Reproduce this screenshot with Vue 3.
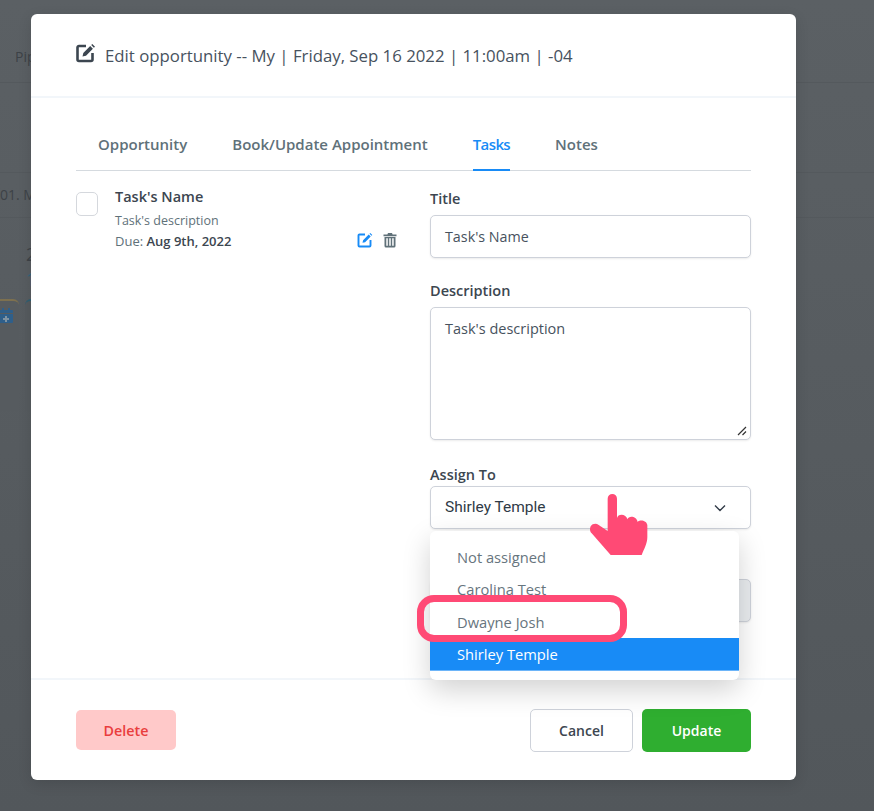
<script setup>
const tabs = [
  { label: 'Opportunity', active: false },
  { label: 'Book/Update Appointment', active: false },
  { label: 'Tasks', active: true },
  { label: 'Notes', active: false },
]
const options = ['Not assigned', 'Carolina Test', 'Dwayne Josh', 'Shirley Temple']
</script>

<template>
  <div class="page">
    <div class="backdrop">
      <div class="bg-nav">Pipelines</div>
      <div class="bg-band">01. My pipeline</div>
      <div class="bg-col">
        <div class="bg-num">2</div>
        <div class="bg-num teal">1</div>
      </div>
      <div class="bg-cards">
        <div class="bg-card gold">
          <svg class="bg-cal" viewBox="0 0 14 16" width="14" height="16">
            <path d="M1 3h12a1 1 0 0 1 1 1v2H0V4a1 1 0 0 1 1-1zM3 1h2v3H3zM9 1h2v3H9zM0 7h14v8a1 1 0 0 1-1 1H1a1 1 0 0 1-1-1z" fill="#2f5f8a" />
            <path d="M6 9h2v2h2v2H8v2H6v-2H4v-2h2z" fill="#7f93a3" />
          </svg>
        </div>
        <div class="bg-card teal"></div>
      </div>
    </div>

    <div class="modal">
      <header class="modal-head">
        <svg class="head-icon" viewBox="0 0 20 20" width="20" height="20">
          <path d="M10 3H3a1.500 1.500 0 0 0-1.500 1.500v12A1.500 1.500 0 0 0 3 18h12a1.500 1.500 0 0 0 1.500-1.500V10" fill="none" stroke="#3c4650" stroke-width="2.600" />
          <path d="M6.500 13.500l.8-3.500 6.900-6.900 2.700 2.700-6.900 6.900zM15.200 2.100l1.100-1.100 2.700 2.700-1.100 1.100z" fill="#3c4650" />
        </svg>
        <h1 class="head-title">Edit opportunity -- My | Friday, Sep 16 2022 | 11:00am | -04</h1>
      </header>

      <div class="modal-body">
        <nav class="tabs">
          <a v-for="t in tabs" :key="t.label" class="tab" :class="{ active: t.active }">{{ t.label }}</a>
        </nav>

        <div class="columns">
          <section class="task">
            <span class="check"></span>
            <div class="task-main">
              <div class="task-name">Task's Name</div>
              <div class="task-desc">Task's description</div>
              <div class="task-due">Due: <b>Aug 9th, 2022</b></div>
            </div>
            <div class="task-actions">
              <svg viewBox="0 0 16 16" width="16" height="16">
                <path d="M8 2.500H2.500a1 1 0 0 0-1 1v10a1 1 0 0 0 1 1h10a1 1 0 0 0 1-1V8" fill="none" stroke="#188bf6" stroke-width="1.900" />
                <path d="M5.500 10.800l.6-2.600 5.600-5.600 2 2-5.600 5.600zM12.500 1.800l.8-.8 2 2-.8.8z" fill="#188bf6" />
              </svg>
              <svg viewBox="0 0 16 16" width="16" height="16">
                <path d="M6 1h4l.6 1.500H14.500v1.800h-13V2.500h3.900z" fill="#607179" />
                <path d="M2.500 5h11v9a1.500 1.500 0 0 1-1.500 1.500H4A1.500 1.500 0 0 1 2.500 14z" fill="#607179" />
                <path d="M4.300 6.300h1.500v7.500H4.300zM7.250 6.300h1.500v7.500h-1.500zM10.200 6.300h1.500v7.500h-1.500z" fill="#fff" />
              </svg>
            </div>
          </section>

          <section class="form">
            <div class="field">
              <label class="label">Title</label>
              <div class="input">Task's Name</div>
            </div>
            <div class="field">
              <label class="label">Description</label>
              <div class="input textarea">
                Task's description
                <svg class="grip" viewBox="0 0 10 10" width="10" height="10">
                  <path d="M1 9l8-8M5.500 9L9 5.500" stroke="#333" stroke-width="1.200" fill="none" />
                </svg>
              </div>
            </div>
            <div class="field assign">
              <label class="label">Assign To</label>
              <div class="input select">
                <span>Shirley Temple</span>
                <svg viewBox="0 0 12 8" width="12" height="8">
                  <path d="M1 1.500l5 5 5-5" fill="none" stroke="#333c48" stroke-width="1.400" />
                </svg>
              </div>
              <div class="menu">
                <div v-for="o in options" :key="o" class="option" :class="{ on: o === 'Shirley Temple' }">{{ o }}</div>
              </div>
            </div>
            <div class="input disabled"></div>
          </section>
        </div>
      </div>

      <footer class="modal-foot">
        <button class="btn delete">Delete</button>
        <div class="foot-right">
          <button class="btn cancel">Cancel</button>
          <button class="btn update">Update</button>
        </div>
      </footer>

      <div class="ring"></div>
      <svg class="hand" viewBox="0 0 300 270" width="100" height="90">
        <path d="M113 56a14 14 0 0 1 28 0v58c2-14 28-14 31 4 4-12 28-10 31 8 4-8 28-6 29 10v36c0 18-10 36-17 53H122L65 160c-8-8-6-22 3-27 7-3 13-2 18 2l27 18z" fill="#ff4a75" />
      </svg>
    </div>
  </div>
</template>

<style scoped>
.page {
  position: relative;
  width: 874px;
  height: 811px;
  overflow: hidden;
  background: linear-gradient(#5b6064, #52575b);
  font-family: "Open Sans", "Noto Sans", sans-serif;
  color: #3c4650;
}
.backdrop { color: #3d4247; font-size: 14px; }
.bg-nav { height: 83px; padding: 47px 0 0 15px; box-sizing: border-box; border-bottom: 1px solid #54595d; }
.bg-band { margin-top: 89px; height: 44px; line-height: 44px; border-top: 1px solid #54595d; border-bottom: 1px solid #54595d; white-space: nowrap; }
.bg-col { padding: 24px 0 0 26px; }
.bg-num { font-size: 18px; height: 25px; line-height: 25px; }
.bg-num.teal { color: #35647a; }
.bg-cards { display: flex; gap: 6px; margin-top: 7px; margin-left: -8px; }
.bg-card { width: 27px; height: 110px; border-top: 2px solid; border-radius: 6px 6px 0 0; background: #565b5f; }
.bg-card.gold { border-color: #7d704f; }
.bg-card.teal { border-color: #2f5f72; }
.bg-cal { display: block; margin: 6px 0 0 7px; }

.modal {
  position: absolute;
  left: 31px;
  top: 14px;
  width: 765px;
  height: 766px;
  display: flex;
  flex-direction: column;
  background: #fff;
  border-radius: 6px;
  box-shadow: 0 4px 14px rgba(0, 0, 0, 0.12);
}
.modal-head {
  display: flex;
  align-items: center;
  gap: 9px;
  height: 84px;
  padding: 0 45px;
  box-sizing: border-box;
  border-bottom: 2px solid #f2f6fa;
}
.head-icon { flex: none; margin-top: -4px; }
.head-title { margin: 0; font-size: 16.800px; font-weight: 400; color: #47525e; white-space: nowrap; }
.modal-body { flex: 1; padding: 31px 45px 0; }
.tabs {
  display: flex;
  gap: 45px;
  padding-left: 22px;
  height: 42px;
  box-sizing: border-box;
  border-bottom: 1px solid #d5dadf;
}
.tab {
  height: 42px;
  box-sizing: border-box;
  padding-top: 5px;
  font-size: 15px;
  font-weight: 600;
  color: #607179;
  white-space: nowrap;
}
.tab.active { color: #188bf6; border-bottom: 2px solid #188bf6; letter-spacing: -0.6px; }
.columns { display: flex; justify-content: space-between; }
.task { display: flex; width: 322px; padding-top: 16px; box-sizing: border-box; }
.check { flex: none; width: 20px; height: 22px; margin-top: 5px; border: 1px solid #d5d8dd; border-radius: 5px; }
.task-main { flex: 1; margin-left: 17px; }
.task-name { font-size: 14.500px; font-weight: 600; line-height: 20px; color: #3c4650; }
.task-desc { font-size: 12.500px; line-height: 18px; margin-top: 5px; color: #607179; }
.task-due { font-size: 13px; line-height: 18px; margin-top: 2px; color: #607179; }
.task-due b { font-weight: 600; color: #3c4650; }
.task-actions { display: flex; gap: 9px; align-items: flex-start; margin-top: 45px; }
.form { width: 321px; padding-top: 18px; }
.field { position: relative; margin-bottom: 23px; }
.label { display: block; font-size: 14.500px; font-weight: 600; line-height: 20px; margin-bottom: 6px; color: #3c4650; }
.input {
  position: relative;
  height: 43px;
  box-sizing: border-box;
  padding: 0 14px;
  line-height: 41px;
  font-size: 14.300px;
  color: #47525e;
  border: 1px solid #ced2da;
  border-radius: 5px;
  box-shadow: 0 1px 2px rgba(0, 0, 0, 0.08);
  background: #fff;
}
.textarea { height: 133px; line-height: 20px; padding-top: 11px; font-size: 14.500px; }
.field:nth-child(2) { margin-bottom: 25px; }
.grip { position: absolute; right: 3px; bottom: 3px; }
.assign { margin-bottom: 50px; }
.assign .label { margin-bottom: 1px; }
.select {
  display: flex;
  align-items: center;
  justify-content: space-between;
  padding-right: 24px;
  font-family: Roboto, sans-serif;
  font-size: 15.500px;
  color: #2f3a46;
}
.menu {
  position: absolute;
  left: 0;
  top: 66px;
  width: 309px;
  height: 149px;
  padding-top: 10px;
  box-sizing: border-box;
  background: #fff;
  border-radius: 6px;
  box-shadow: 0 10px 28px rgba(0, 0, 0, 0.18);
  z-index: 2;
}
.option { height: 32.300px; line-height: 32px; padding-left: 27px; font-size: 14.700px; color: #67757e; }
.option.on { background: #188bf6; color: #fff; border-bottom: 1px solid #6db5f9; box-sizing: border-box; height: 33px; }

.modal-foot {
  display: flex;
  align-items: center;
  justify-content: space-between;
  height: 102px;
  padding: 0 45px;
  box-sizing: border-box;
  border-top: 2px solid #f2f6fa;
}
.foot-right { display: flex; gap: 9px; }
.btn {
  height: 43px;
  border-radius: 5px;
  border: 0;
  font-family: inherit;
  font-size: 14px;
  font-weight: 600;
}
.delete { width: 100px; height: 40px; background: #ffc9c9; color: #e93d3d; font-size: 14.300px; }
.cancel { width: 103px; background: #fff; border: 1px solid #ced2da; color: #3c4650; }
.update { width: 109px; background: #2fae30; color: #fff; }
.disabled { background: #e9ecef; }

.ring {
  position: absolute;
  left: 386px;
  top: 581px;
  width: 210px;
  height: 47px;
  box-sizing: border-box;
  border: 7px solid #ff4a75;
  border-radius: 17px;
  z-index: 3;
}
.hand { position: absolute; left: 539px; top: 466px; z-index: 3; }
</style>
